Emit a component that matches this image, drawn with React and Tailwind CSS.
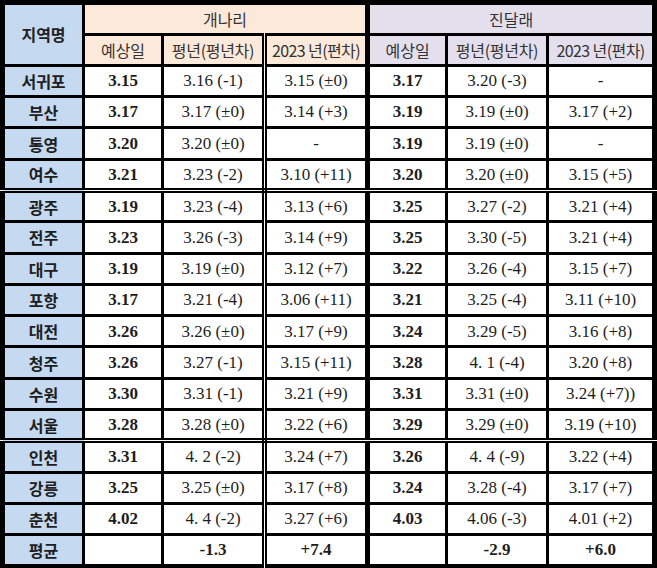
import React from "react";

const rows = [
  ["서귀포", "3.15", "3.16 (-1)", "3.15 (±0)", "3.17", "3.20 (-3)", "-"],
  ["부산", "3.17", "3.17 (±0)", "3.14 (+3)", "3.19", "3.19 (±0)", "3.17 (+2)"],
  ["통영", "3.20", "3.20 (±0)", "-", "3.19", "3.19 (±0)", "-"],
  ["여수", "3.21", "3.23 (-2)", "3.10 (+11)", "3.20", "3.20 (±0)", "3.15 (+5)"],
  ["광주", "3.19", "3.23 (-4)", "3.13 (+6)", "3.25", "3.27 (-2)", "3.21 (+4)"],
  ["전주", "3.23", "3.26 (-3)", "3.14 (+9)", "3.25", "3.30 (-5)", "3.21 (+4)"],
  ["대구", "3.19", "3.19 (±0)", "3.12 (+7)", "3.22", "3.26 (-4)", "3.15 (+7)"],
  ["포항", "3.17", "3.21 (-4)", "3.06 (+11)", "3.21", "3.25 (-4)", "3.11 (+10)"],
  ["대전", "3.26", "3.26 (±0)", "3.17 (+9)", "3.24", "3.29 (-5)", "3.16 (+8)"],
  ["청주", "3.26", "3.27 (-1)", "3.15 (+11)", "3.28", "4. 1 (-4)", "3.20 (+8)"],
  ["수원", "3.30", "3.31 (-1)", "3.21 (+9)", "3.31", "3.31 (±0)", "3.24 (+7))"],
  ["서울", "3.28", "3.28 (±0)", "3.22 (+6)", "3.29", "3.29 (±0)", "3.19 (+10)"],
  ["인천", "3.31", "4. 2 (-2)", "3.24 (+7)", "3.26", "4. 4 (-9)", "3.22 (+4)"],
  ["강릉", "3.25", "3.25 (±0)", "3.17 (+8)", "3.24", "3.28 (-4)", "3.17 (+7)"],
  ["춘천", "4.02", "4. 4 (-2)", "3.27 (+6)", "4.03", "4.06 (-3)", "4.01 (+2)"],
];

// rows followed by a double rule
const doubleAfter = ["여수", "서울"];

const kr = "font-['Noto_Sans_CJK_KR',sans-serif]";
const num = "font-['Liberation_Serif','Noto_Sans_CJK_KR',serif]";
const cell = "border-[3px] border-black text-center p-0";
const dblRight = "border-r-[5px] [border-right-style:double]";
const groupRight = "border-r-[5px]";
const hd = "text-[16px] font-normal text-[#333]";

const App = () => {
  return (
    <div className="bg-white w-[657px] h-[568px]">
      <table className="table-fixed border-collapse border-[5px] border-black w-[656px] text-[#1e1e1e]">
        <colgroup>
          <col className="w-[81px]" />
          <col className="w-[79px]" />
          <col className="w-[102px]" />
          <col className="w-[103px]" />
          <col className="w-[79px]" />
          <col className="w-[101px]" />
          <col className="w-[107px]" />
        </colgroup>
        <thead>
          <tr className="h-[31.5px]">
            <th
              rowSpan={2}
              className={`${cell} ${kr} bg-[#c5d9f1] text-[16px] font-bold text-[#222]`}
            >
              지역명
            </th>
            <th colSpan={3} className={`${cell} ${kr} ${groupRight} ${hd} bg-[#fde9d9]`}>
              개나리
            </th>
            <th colSpan={3} className={`${cell} ${kr} ${hd} bg-[#e4dfec]`}>
              진달래
            </th>
          </tr>
          <tr className="h-[31.3px]">
            <th className={`${cell} ${kr} ${hd} bg-[#fde9d9]`}>예상일</th>
            <th className={`${cell} ${kr} ${dblRight} ${hd} bg-[#fde9d9] tracking-[-0.3px]`}>
              평년(평년차)
            </th>
            <th className={`${cell} ${kr} ${groupRight} ${hd} bg-[#fde9d9] tracking-[-0.6px]`}>
              2023 년(편차)
            </th>
            <th className={`${cell} ${kr} ${hd} bg-[#e4dfec]`}>예상일</th>
            <th className={`${cell} ${kr} ${hd} bg-[#e4dfec] tracking-[-0.3px]`}>
              평년(평년차)
            </th>
            <th className={`${cell} ${kr} ${hd} bg-[#e4dfec] tracking-[-0.6px]`}>
              2023 년(편차)
            </th>
          </tr>
        </thead>
        <tbody>
          {rows.map((r) => {
            const dbl = doubleAfter.includes(r[0])
              ? "border-b-[5px] [border-bottom-style:double]"
              : "";
            return (
              <tr key={r[0]} className="h-[31.3px]">
                <td className={`${cell} ${dbl} ${kr} bg-[#c5d9f1] text-[16px] font-bold`}>
                  {r[0]}
                </td>
                <td className={`${cell} ${dbl} ${num} text-[17px] font-bold`}>{r[1]}</td>
                <td className={`${cell} ${dbl} ${dblRight} ${num} text-[17px]`}>{r[2]}</td>
                <td className={`${cell} ${dbl} ${groupRight} ${num} text-[17px]`}>{r[3]}</td>
                <td className={`${cell} ${dbl} ${num} text-[17px] font-bold`}>{r[4]}</td>
                <td className={`${cell} ${dbl} ${num} text-[17px]`}>{r[5]}</td>
                <td className={`${cell} ${dbl} ${num} text-[17px]`}>{r[6]}</td>
              </tr>
            );
          })}
          <tr className="h-[31.3px]">
            <td className={`${cell} ${kr} bg-[#c5d9f1] text-[16px] font-bold`}>평균</td>
            <td className={`${cell}`}></td>
            <td className={`${cell} ${dblRight} ${num} text-[17px] font-bold`}>-1.3</td>
            <td className={`${cell} ${groupRight} ${num} text-[17px] font-bold`}>+7.4</td>
            <td className={`${cell}`}></td>
            <td className={`${cell} ${num} text-[17px] font-bold`}>-2.9</td>
            <td className={`${cell} ${num} text-[17px] font-bold`}>+6.0</td>
          </tr>
        </tbody>
      </table>
    </div>
  );
};

export default App;
